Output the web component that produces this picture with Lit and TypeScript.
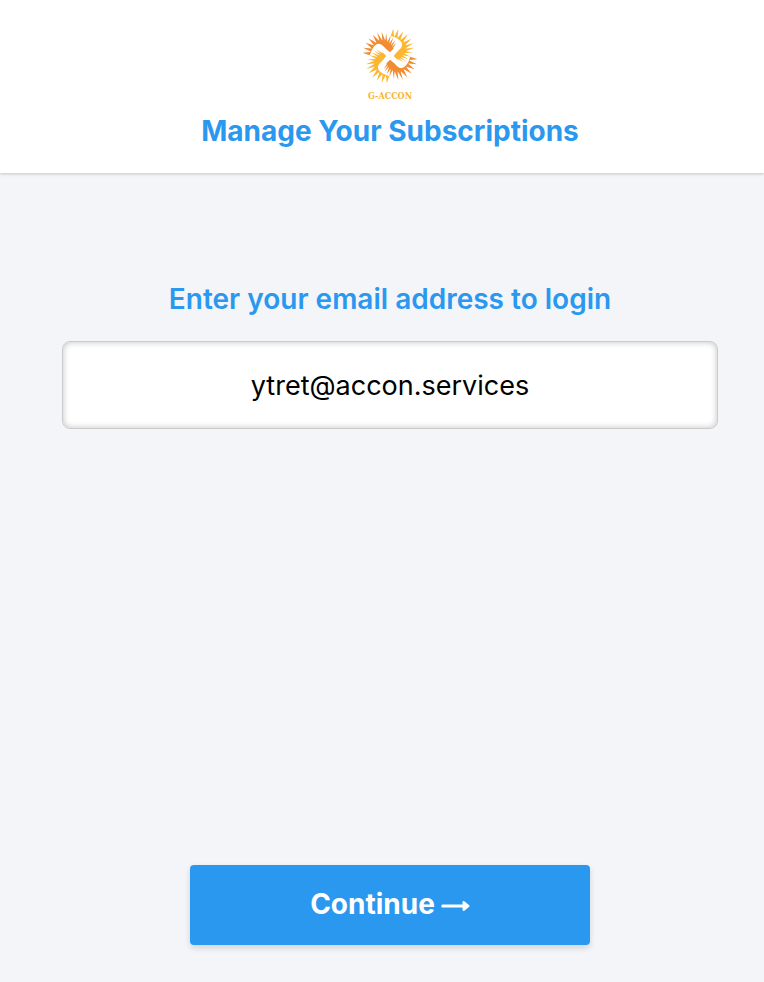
import { LitElement, html, svg, css } from "lit";
import { customElement, state } from "lit/decorators.js";

const AMBER = "#fdb62f";
const ORANGE = "#f08c32";

type Point = [number, number];

/** Outline of one blade, measured from the centre of the sun. */
const BASE: Point[] = [[-60, -2], [-56, -20], [-46, -36], [-31, -47], [-15, -47], [-4, -40], [4, -31], [9, -23]];
const TIPS: Point[] = [[-82, -2], [-79, -28], [-65, -52], [-43, -70], [-20, -72], [3, -61], [16, -49], [20, -35]];
const UNDER = "L11 -22L0 -11Q-10 -18 -22 -31Q-34 -42 -47 -29Q-56 -18 -60 -2Z";

const along = (line: Point[], t: number): Point => {
  const s = Math.max(0, Math.min(1, t)) * (line.length - 1);
  const i = Math.min(Math.floor(s), line.length - 2);
  const f = s - i;
  return [
    line[i][0] + (line[i + 1][0] - line[i][0]) * f,
    line[i][1] + (line[i + 1][1] - line[i][1]) * f,
  ];
};

function blade(): string {
  const rays = 12;
  const points: string[] = [];
  for (let i = 0; i < rays; i++) {
    points.push(
      along(BASE, (i + 0.05) / rays).join(" "),
      along(TIPS, (i + 0.5) / rays).join(" "),
      along(BASE, (i + 0.95) / rays).join(" ")
    );
  }
  return `M${points.join("L")}${UNDER}`;
}

const BLADE = blade();

@customElement("sun-logo")
export class SunLogo extends LitElement {
  static styles = css`
    :host {
      display: flex;
      flex-direction: column;
      align-items: center;
    }
    .sun {
      display: block;
      width: 54px;
      height: 54px;
    }
    .name {
      margin-top: 6px;
      font: bold 9px/14px "DejaVu Serif Condensed", "DejaVu Serif", serif;
      color: #fbb52c;
    }
  `;

  render() {
    return html`
      <svg class="sun" viewBox="-80 -80 160 160" aria-hidden="true">
        ${[0, 90, 180, 270].map(
          (deg, i) =>
            svg`<path d=${BLADE} transform="rotate(${deg})" fill=${i % 2 ? AMBER : ORANGE}></path>`
        )}
      </svg>
      <span class="name">G-ACCON</span>
    `;
  }
}

@customElement("app-root")
export class AppRoot extends LitElement {
  static styles = css`
    :host {
      display: flex;
      flex-direction: column;
      min-height: 100vh;
      background: #f3f5f9;
      color: #2b98f0;
      font-family: Inter, "Liberation Sans", sans-serif;
    }
    * {
      box-sizing: border-box;
    }
    header {
      display: flex;
      flex-direction: column;
      align-items: center;
      padding: 29px 0 24px 16px;
      background: #fff;
      box-shadow: 0 1px 3px rgba(0, 0, 0, 0.2);
    }
    h1 {
      margin: 10px 0 0;
      font-size: 28px;
      line-height: 36px;
      font-weight: 700;
    }
    form {
      flex: 1;
      display: flex;
      flex-direction: column;
      align-items: center;
      padding: 108px 46px 37px 62px;
    }
    label {
      font-size: 28px;
      line-height: 36px;
      font-weight: 600;
    }
    input {
      width: 100%;
      height: 88px;
      margin-top: 24px;
      padding: 0 16px;
      border: 1px solid #ccc;
      border-radius: 8px;
      background: #fff;
      box-shadow: inset 0 0 6px rgba(0, 0, 0, 0.25);
      color: #000;
      font: 400 27px/36px Inter, "Liberation Sans", sans-serif;
      text-align: center;
      outline: none;
    }
    button {
      display: flex;
      align-items: center;
      justify-content: center;
      gap: 6px;
      width: 400px;
      max-width: 100%;
      height: 80px;
      margin-top: auto;
      padding: 0 0 2px;
      border: 0;
      border-radius: 4px;
      background: #2b98f0;
      box-shadow: 0 3px 6px rgba(0, 0, 0, 0.14);
      color: #fff;
      font: 700 28px/36px Inter, "Liberation Sans", sans-serif;
      cursor: pointer;
    }
    .arrow {
      display: block;
      width: 29px;
      height: 12px;
      margin-top: 4px;
    }
  `;

  @state() private email = "ytret@accon.services";

  render() {
    return html`
      <header>
        <sun-logo></sun-logo>
        <h1>Manage Your Subscriptions</h1>
      </header>
      <form @submit=${(e: Event) => e.preventDefault()}>
        <label for="email">Enter your email address to login</label>
        <input
          id="email"
          type="email"
          .value=${this.email}
          @input=${(e: Event) => (this.email = (e.target as HTMLInputElement).value)}
        />
        <button type="submit">
          Continue
          <svg class="arrow" viewBox="0 0 29 12" aria-hidden="true">
            <path
              d="M1.5 4.5H21.5V2.4Q21.5 .4 23.3 1.2L28.2 5.2Q29 6 28.2 6.8L23.3 10.8Q21.5 11.6 21.5 9.6V7.5H1.5Q.3 7.5 .3 6T1.5 4.5Z"
              fill="currentColor"
            ></path>
          </svg>
        </button>
      </form>
    `;
  }
}
